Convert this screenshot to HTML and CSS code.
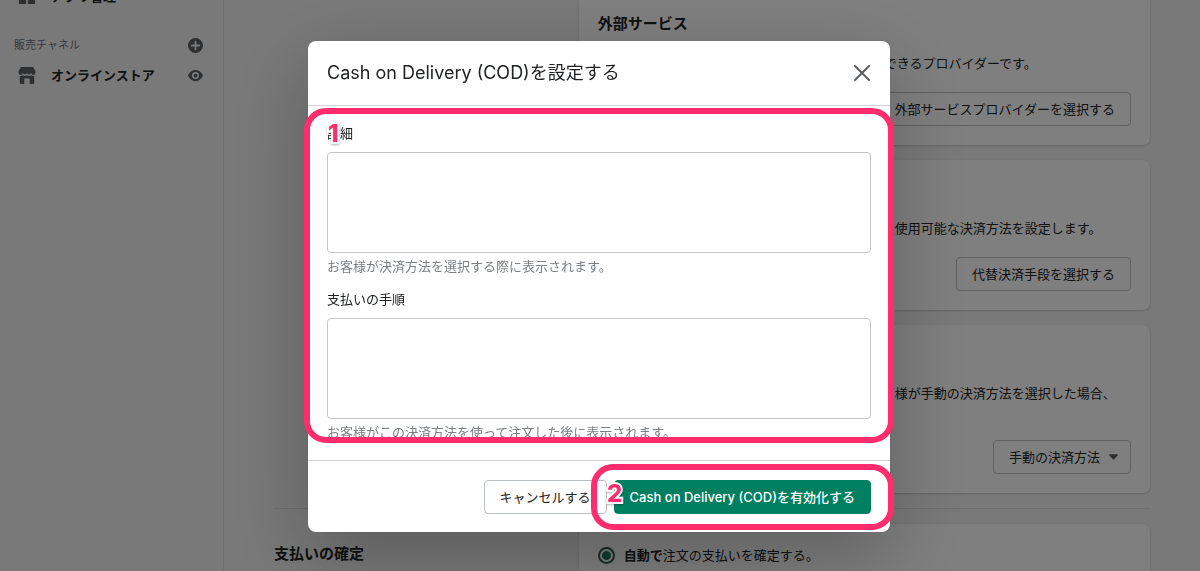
FILE: index.html
```html
<!DOCTYPE html>
<html lang="ja">
<head>
<meta charset="utf-8">
<meta name="viewport" content="width=device-width, initial-scale=1">
<title>Cash on Delivery (COD)を設定する</title>
<link rel="stylesheet" href="styles.css">
</head>
<body>
<div class="app">
  <nav class="sidebar" aria-label="メニュー">
    <a class="nav-item" href="#apps">
      <svg class="icon" viewBox="0 0 20 20" aria-hidden="true"><path d="M2 1h7v8H1V2a1 1 0 0 1 1-1zm9 0h7a1 1 0 0 1 1 1v7h-8zM1 11h8v8H2a1 1 0 0 1-1-1zm10 0h8v7a1 1 0 0 1-1 1h-7z"/></svg>
      <span class="nav-label">アプリ管理</span>
    </a>
    <div class="nav-heading">
      <span>販売チャネル</span>
      <button class="icon-button" type="button" aria-label="チャネルを追加">
        <svg class="icon-small" viewBox="0 0 16 16" aria-hidden="true"><path fill-rule="evenodd" d="M8 0a8 8 0 1 0 0 16A8 8 0 0 0 8 0zM7 4a1 1 0 0 1 2 0v3h3a1 1 0 0 1 0 2H9v3a1 1 0 0 1-2 0V9H4a1 1 0 0 1 0-2h3z"/></svg>
      </button>
    </div>
    <div class="nav-row">
      <a class="nav-item" href="#store">
        <svg class="icon" viewBox="0 0 20 20" aria-hidden="true"><path d="M3 1.500A1 1 0 0 1 4 1h12a1 1 0 0 1 1 .5L19.500 6v1.500a2.400 2.400 0 0 1-4.800 0 2.400 2.400 0 0 1-4.700 0 2.400 2.400 0 0 1-4.700 0 2.400 2.400 0 0 1-4.800 0V6z"/><path d="M2 11c1.400.3 2.500 0 3.300-.7 1.400 1 3.300 1 4.700 0 1.400 1 3.300 1 4.700 0 .8.700 1.900 1 3.300.7v8a1 1 0 0 1-1 1h-4v-6H7v6H3a1 1 0 0 1-1-1z"/></svg>
        <span class="nav-label">オンラインストア</span>
      </a>
      <button class="icon-button" type="button" aria-label="ストアを表示">
        <svg class="icon-small" viewBox="0 0 16 16" aria-hidden="true"><path fill-rule="evenodd" d="M8 2C4 2 1.200 5 0 8c1.200 3 4 6 8 6s6.800-3 8-6c-1.200-3-4-6-8-6zm0 2.200a3.800 3.800 0 1 1 0 7.600 3.800 3.800 0 0 1 0-7.600z"/><circle cx="8" cy="8" r="2"/></svg>
      </button>
    </div>
  </nav>

  <main class="content">
    <section class="section">
      <div class="section-title"></div>
      <div class="cards">
        <article class="card card-first">
          <h2 class="card-title">外部サービス</h2>
          <p class="card-text">お客様からクレジットカード決済を受けることができるプロバイダーです。</p>
          <button class="button" type="button">外部サービスプロバイダーを選択する</button>
        </article>
        <article class="card">
          <h2 class="card-title">代替の決済方法</h2>
          <p class="card-text">外部サービスプロバイダーに加えて、ストアで別途使用可能な決済方法を設定します。</p>
          <button class="button" type="button">代替決済手段を選択する</button>
        </article>
        <article class="card">
          <h2 class="card-title">手動の決済方法</h2>
          <p class="card-text">オンラインストア以外で受け取る支払いです。お客様が手動の決済方法を選択した場合、<br>注文の承認が必要です。</p>
          <button class="button button-menu" type="button">手動の決済方法
            <svg class="caret" viewBox="0 0 10 6" aria-hidden="true"><path d="M1 0h8c.8 0 1.100.8.6 1.300L5.700 5.600a1 1 0 0 1-1.400 0L.4 1.300C-.1.800.2 0 1 0z"/></svg>
          </button>
        </article>
      </div>
    </section>
    <section class="section section-divided">
      <h2 class="section-title">支払いの確定</h2>
      <div class="cards">
        <div class="card card-options">
          <label class="option"><input class="radio" type="radio" name="capture" checked><span><b>自動で</b>注文の支払いを確定する。</span></label>
        </div>
      </div>
    </section>
  </main>
</div>

<div class="backdrop">
  <div class="modal" role="dialog" aria-modal="true" aria-labelledby="modal-title">
    <header class="modal-header">
      <h1 class="modal-title" id="modal-title">Cash on Delivery (COD)を設定する</h1>
      <button class="icon-button" type="button" aria-label="閉じる">
        <svg class="close" viewBox="0 0 16 16" aria-hidden="true"><path d="M1 1l14 14M15 1L1 15"/></svg>
      </button>
    </header>
    <form class="modal-body" id="cod-form">
      <div class="field">
        <label class="label" for="details">詳細</label>
        <textarea class="textarea" id="details" aria-describedby="details-help"></textarea>
        <p class="help" id="details-help">お客様が決済方法を選択する際に表示されます。</p>
      </div>
      <div class="field">
        <label class="label" for="steps">支払いの手順</label>
        <textarea class="textarea" id="steps" aria-describedby="steps-help"></textarea>
        <p class="help" id="steps-help">お客様がこの決済方法を使って注文した後に表示されます。</p>
      </div>
      <div class="marker marker-form"><span class="marker-number">1</span></div>
    </form>
    <footer class="modal-footer">
      <button class="button" type="button">キャンセルする</button>
      <button class="button button-primary" type="submit" form="cod-form">Cash on Delivery (COD)を有効化する</button>
      <div class="marker marker-submit"><span class="marker-number">2</span></div>
    </footer>
  </div>
</div>
</body>
</html>
```

FILE: styles.css
```css
* {
  box-sizing: border-box;
}

body {
  margin: 0;
  overflow: hidden;
  background: #f3f3f4;
  color: #202223;
  font: 13px/18px Inter, "Noto Sans CJK JP", sans-serif;
}

h1, h2, p {
  margin: 0;
}

button, textarea {
  font: inherit;
  color: inherit;
}

.app {
  display: flex;
  height: 100vh;
  overflow: hidden;
}

/* Sidebar */
.sidebar {
  flex: 0 0 224px;
  padding: 0 20px 0 14px;
  border-right: 1px solid #dcdddf;
}

.sidebar > .nav-item {
  margin-top: -14px;
}

.nav-item {
  display: flex;
  align-items: center;
  gap: 15px;
  height: 20px;
  padding-left: 4px;
  color: #202223;
  text-decoration: none;
}

.nav-label {
  font-weight: 700;
}

.nav-heading,
.nav-row {
  display: flex;
  align-items: center;
  justify-content: space-between;
  height: 30px;
}

.nav-heading {
  margin-top: 24px;
  color: #6d7175;
  font-size: 11px;
}

.icon-button {
  display: flex;
  padding: 0;
  border: 0;
  background: none;
}

.icon {
  width: 18px;
  height: 18px;
  fill: #5c5f62;
}

.icon-small {
  width: 15px;
  height: 15px;
  fill: #5c5f62;
}

/* Settings */
.content {
  flex: 1;
  padding: 0 50px;
}

.section {
  display: grid;
  grid-template-columns: 1fr 2fr;
  gap: 19px;
}

.section-divided {
  margin-top: 15px;
  padding-top: 15px;
  border-top: 1px solid #dcdddf;
}

.section-title {
  padding-top: 20px;
  font-size: 15px;
  line-height: 20px;
  font-weight: 700;
}

.cards {
  display: flex;
  flex-direction: column;
  gap: 15px;
}

.card {
  display: flex;
  flex-direction: column;
  gap: 20px;
  padding: 19px;
  border-radius: 7px;
  background: #fff;
  box-shadow: 0 0 4px rgba(23, 24, 24, .06), 0 1px 2px rgba(0, 0, 0, .14);
}

.card-first {
  padding-top: 14px;
  border-radius: 0 0 7px 7px;
}

.card-options {
  min-height: 90px;
  padding-top: 22px;
}

.card-title {
  font-size: 15px;
  line-height: 20px;
  font-weight: 700;
}

.card .button {
  align-self: flex-end;
}

.option {
  display: flex;
  align-items: center;
  gap: 9px;
}

.radio {
  appearance: none;
  width: 17px;
  height: 17px;
  margin: 0;
  border: 2px solid #3c5850;
  border-radius: 50%;
  background: radial-gradient(circle, #1d7a60 4px, transparent 5px);
}

.button {
  display: flex;
  align-items: center;
  justify-content: center;
  gap: 9px;
  height: 34px;
  padding: 0 15px;
  border: 1px solid #babfc3;
  border-radius: 4px;
  background: #fff;
  white-space: nowrap;
}

.button-menu {
  padding-right: 12px;
}

.caret {
  width: 9px;
  height: 6px;
  fill: #5c5f62;
}

/* Dialog */
.backdrop {
  position: fixed;
  inset: 0;
  display: flex;
  align-items: center;
  justify-content: center;
  padding: 22px 22px 20px 20px;
  background: rgba(0, 0, 0, .5);
}

.modal {
  width: 100%;
  max-width: 582px;
  border-radius: 8px;
  background: #fff;
  box-shadow: 0 26px 80px rgba(0, 0, 0, .26), 0 0 1px rgba(0, 0, 0, .2);
}

.modal-header {
  display: flex;
  align-items: center;
  justify-content: space-between;
  padding: 19px 20px 19px 19px;
  border-bottom: 1px solid #d2d5d8;
}

.modal-title {
  font-size: 18px;
  line-height: 26px;
  font-weight: 400;
}

.close {
  width: 16px;
  height: 16px;
  fill: none;
  stroke: #5c5f62;
  stroke-width: 2;
  stroke-linecap: round;
}

.modal-body {
  position: relative;
  display: flex;
  flex-direction: column;
  gap: 15px;
  padding: 18px 19px 19px;
}

.field {
  display: flex;
  flex-direction: column;
  gap: 4px;
}

.label {
  align-self: flex-start;
  padding-bottom: 6px;
}

.textarea {
  width: 100%;
  height: 101px;
  padding: 6px 11px;
  border: 1px solid #c3c6c9;
  border-radius: 4px;
  background: #fff;
  resize: none;
}

.help {
  color: #7c8084;
}

.modal-footer {
  position: relative;
  display: flex;
  justify-content: flex-end;
  gap: 7px;
  padding: 19px 19px 18px;
  border-top: 1px solid #d2d5d8;
}

.button-primary {
  border-color: #008060;
  background: #008060;
  color: #fff;
  font-weight: 500;
}

/* Numbered step markers */
.marker {
  position: absolute;
  border: 6px solid #ff2d6d;
  border-radius: 22px;
  pointer-events: none;
}

.marker-form {
  inset: 2px -4px 17px;
}

.marker-submit {
  top: 3px;
  right: -4px;
  bottom: 2px;
  width: 303px;
}

.marker-number {
  position: absolute;
  color: #ff2d6d;
  font: 800 24px/24px Inter, sans-serif;
  -webkit-text-stroke: 4px #fff;
  paint-order: stroke fill;
  filter: drop-shadow(0 1px 1px rgba(0, 0, 0, .3));
}

.marker-form .marker-number {
  top: 8px;
  left: 18px;
}

.marker-submit .marker-number {
  top: 12px;
  left: 10px;
}
```
